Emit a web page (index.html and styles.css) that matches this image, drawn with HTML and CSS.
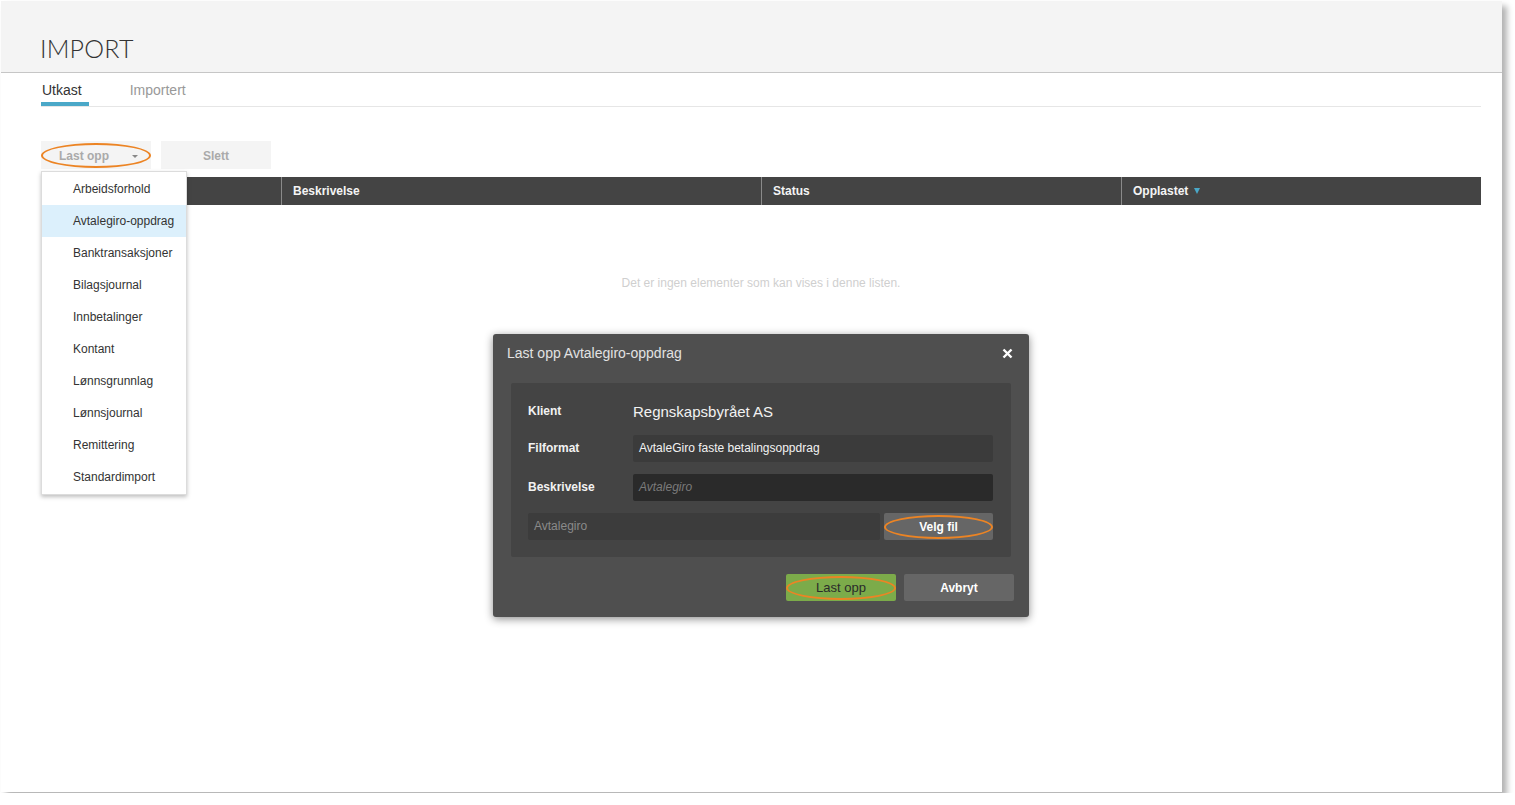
FILE: index.html
```html
<!DOCTYPE html>
<html lang="no">
<head>
    <meta charset="UTF-8">
    <title>Import</title>
    <link rel="stylesheet" href="styles.css">
</head>
<body>

<div class="window">
    <header class="page-header">
        <h1>IMPORT</h1>
    </header>

    <div class="content">
        <nav class="tabs">
            <a class="tab active">Utkast</a>
            <a class="tab">Importert</a>
        </nav>

        <div class="toolbar">
            <div class="dropdown">
                <button class="btn btn-split marked">Last opp <span class="caret"></span></button>
                <ul class="dropdown-menu">
                    <li>Arbeidsforhold</li>
                    <li class="hover">Avtalegiro-oppdrag</li>
                    <li>Banktransaksjoner</li>
                    <li>Bilagsjournal</li>
                    <li>Innbetalinger</li>
                    <li>Kontant</li>
                    <li>Lønnsgrunnlag</li>
                    <li>Lønnsjournal</li>
                    <li>Remittering</li>
                    <li>Standardimport</li>
                </ul>
            </div>
            <button class="btn">Slett</button>
        </div>

        <div class="grid">
            <div class="grid-head">
                <div class="col"></div>
                <div class="col">Beskrivelse</div>
                <div class="col">Status</div>
                <div class="col">Opplastet <span class="sort"></span></div>
            </div>
            <div class="grid-empty">Det er ingen elementer som kan vises i denne listen.</div>
        </div>
    </div>

    <div class="modal">
        <div class="modal-title">
            <span>Last opp Avtalegiro-oppdrag</span>
            <svg class="close" width="11" height="11" viewBox="0 0 11 11">
                <path d="M1.5 1.5 L9.5 9.5 M9.5 1.5 L1.5 9.5" stroke="#fff" stroke-width="2.4" fill="none"/>
            </svg>
        </div>
        <div class="modal-body">
            <div class="form-row first">
                <label>Klient</label>
                <div class="value">Regnskapsbyrået AS</div>
            </div>
            <div class="form-row">
                <label>Filformat</label>
                <div class="input select">AvtaleGiro faste betalingsoppdrag</div>
            </div>
            <div class="form-row">
                <label>Beskrivelse</label>
                <div class="input text placeholder">Avtalegiro</div>
            </div>
            <div class="file-row">
                <div class="file-name">Avtalegiro</div>
                <button class="btn-dark marked">Velg fil</button>
            </div>
        </div>
        <div class="modal-footer">
            <button class="btn-green marked">Last opp</button>
            <button class="btn-dark">Avbryt</button>
        </div>
    </div>
</div>

</body>
</html>
```

FILE: styles.css
```css
* {
    margin: 0;
    padding: 0;
    box-sizing: border-box;
}

body {
    background: #fff;
    font-family: "Liberation Sans", Arial, sans-serif;
    color: #333;
}

.window {
    position: relative;
    width: 1501px;
    height: 791px;
    margin: 1px;
    background: #fff;
    box-shadow: 5px 5px 6px rgba(0, 0, 0, 0.3);
}

.page-header {
    height: 72px;
    background: #f4f4f4;
    border-bottom: 1px solid #c6c6c6;
    padding: 32px 0 0 39px;
}

.page-header h1 {
    font-family: Lato, "Liberation Sans", sans-serif;
    font-weight: 300;
    font-size: 25px;
    line-height: 30px;
    letter-spacing: 0.2px;
    color: #333;
}

.content {
    padding: 0 21px 0 40px;
}

.tabs {
    display: flex;
    border-bottom: 1px solid #e6e6e6;
}

.tab {
    font-size: 14px;
    line-height: 20px;
    padding: 7px 7px 2px 1px;
    border-bottom: 4px solid transparent;
    margin-right: 40px;
    color: #999;
}

.tab.active {
    color: #333;
    border-bottom-color: #4aa8c8;
}

.toolbar {
    display: flex;
    gap: 10px;
    margin-top: 34px;
}

.dropdown {
    position: relative;
}

.btn {
    position: relative;
    width: 110px;
    height: 28px;
    border: none;
    padding-top: 2px;
    background: #f4f4f4;
    color: #aaa;
    font-family: "Liberation Sans", Arial, sans-serif;
    font-weight: bold;
    font-size: 12px;
}

.btn-split {
    text-align: left;
    padding-left: 18px;
}

.caret {
    position: absolute;
    right: 13px;
    top: 14px;
    border-left: 3px solid transparent;
    border-right: 3px solid transparent;
    border-top: 3px solid #888;
}

/* orange highlight ring around a control */
.marked::after {
    content: "";
    position: absolute;
    left: 0;
    right: 0;
    top: 2px;
    bottom: 1px;
    border: 2.5px solid #ec8424;
    border-radius: 50%;
}

.dropdown-menu {
    position: absolute;
    top: 30px;
    left: 0;
    width: 146px;
    list-style: none;
    background: #fff;
    border: 1px solid #dcdcdc;
    padding: 1px 0;
    box-shadow: 0 2px 4px rgba(0, 0, 0, 0.25);
    z-index: 2;
}

.dropdown-menu li {
    height: 32px;
    line-height: 32px;
    padding-left: 31px;
    font-size: 12px;
    color: #333;
}

.dropdown-menu li.hover {
    background: #dcf0fc;
}

.grid {
    margin-top: 8px;
}

.grid-head {
    display: grid;
    grid-template-columns: 240px 480px 360px 360px;
    height: 28px;
    background: #444;
}

.grid-head .col {
    color: #f4f4f4;
    font-weight: bold;
    font-size: 12px;
    line-height: 28px;
    padding-left: 11px;
}

.grid-head .col + .col {
    border-left: 1px solid #8a8a8a;
}

.sort {
    display: inline-block;
    vertical-align: 1px;
    margin-left: 2px;
    border-left: 3px solid transparent;
    border-right: 3px solid transparent;
    border-top: 6px solid #4aa8c8;
}

.grid-empty {
    text-align: center;
    padding-top: 70px;
    font-size: 12px;
    line-height: 16px;
    color: #cfcfcf;
}

.modal {
    position: absolute;
    left: 492px;
    top: 333px;
    width: 536px;
    height: 283px;
    background: #4f4f4f;
    border-radius: 3px;
    box-shadow: 0 2px 8px rgba(0, 0, 0, 0.45);
}

.modal-title {
    display: flex;
    justify-content: space-between;
    align-items: center;
    height: 49px;
    padding: 0 16px 11px 14px;
    font-size: 14px;
    color: #e2e2e2;
}

.modal-body {
    margin: 0 18px;
    background: #444;
    border-radius: 2px;
    padding: 17px 17px 17px;
    display: flex;
    flex-direction: column;
    gap: 12px;
}

.form-row {
    display: flex;
    align-items: center;
    height: 27px;
}

.form-row.first {
    height: 23px;
}

.form-row label {
    width: 105px;
    margin-top: -2px;
    font-size: 12px;
    font-weight: bold;
    color: #f2f2f2;
}

.form-row .value {
    font-size: 15px;
    color: #f2f2f2;
}

.input {
    width: 360px;
    height: 27px;
    line-height: 27px;
    padding-left: 6px;
    font-size: 12px;
    border-radius: 2px;
}

.input.select {
    background: #3b3b3b;
    color: #f2f2f2;
}

.input.text {
    background: #2a2a2a;
}

.placeholder {
    color: #7a7a7a;
    font-style: italic;
}

.file-row {
    display: flex;
    gap: 4px;
    height: 27px;
}

.file-name {
    width: 352px;
    background: #3c3c3c;
    border-radius: 2px;
    line-height: 27px;
    padding-left: 6px;
    font-size: 12px;
    color: #8a8a8a;
}

.btn-dark,
.btn-green {
    position: relative;
    width: 110px;
    height: 27px;
    border: none;
    border-radius: 2px;
    font-family: "Liberation Sans", Arial, sans-serif;
    font-size: 12px;
}

.btn-dark {
    background: #666;
    color: #fff;
    font-weight: bold;
}

.btn-green {
    background: #7cab4a;
    color: #2a2a2a;
    font-size: 13px;
}

.file-row .btn-dark {
    width: 109px;
}

.modal-footer {
    display: flex;
    justify-content: flex-end;
    gap: 8px;
    padding: 17px 15px 0 0;
}
```
